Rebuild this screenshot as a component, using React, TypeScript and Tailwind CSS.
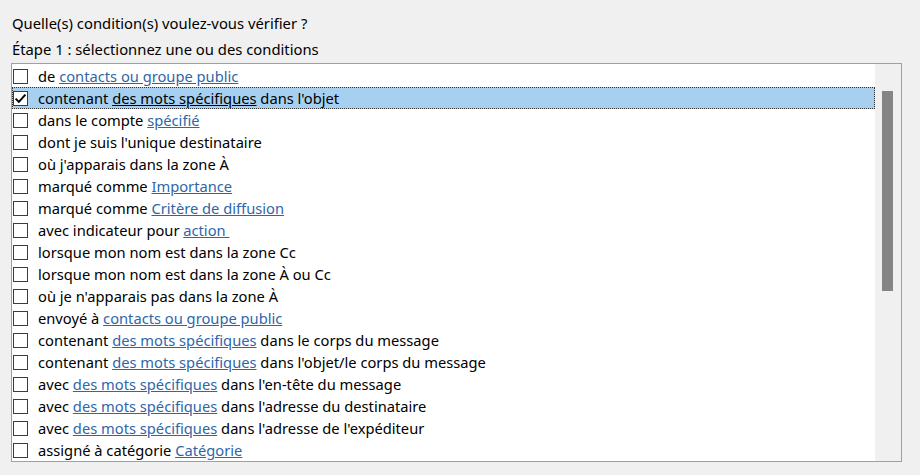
import React from "react";

type Part = { t: string; link?: boolean };
const rows: Part[][] = [
  [{ t: "de " }, { t: "contacts ou groupe public", link: true }],
  [{ t: "contenant " }, { t: "des mots spécifiques", link: true }, { t: " dans l'objet" }],
  [{ t: "dans le compte " }, { t: "spécifié", link: true }],
  [{ t: "dont je suis l'unique destinataire" }],
  [{ t: "où j'apparais dans la zone À" }],
  [{ t: "marqué comme " }, { t: "Importance", link: true }],
  [{ t: "marqué comme " }, { t: "Critère de diffusion", link: true }],
  [{ t: "avec indicateur pour " }, { t: "action\u00a0", link: true }],
  [{ t: "lorsque mon nom est dans la zone Cc" }],
  [{ t: "lorsque mon nom est dans la zone À ou Cc" }],
  [{ t: "où je n'apparais pas dans la zone À" }],
  [{ t: "envoyé à " }, { t: "contacts ou groupe public", link: true }],
  [{ t: "contenant " }, { t: "des mots spécifiques", link: true }, { t: " dans le corps du message" }],
  [{ t: "contenant " }, { t: "des mots spécifiques", link: true }, { t: " dans l'objet/le corps du message" }],
  [{ t: "avec " }, { t: "des mots spécifiques", link: true }, { t: " dans l'en-tête du message" }],
  [{ t: "avec " }, { t: "des mots spécifiques", link: true }, { t: " dans l'adresse du destinataire" }],
  [{ t: "avec " }, { t: "des mots spécifiques", link: true }, { t: " dans l'adresse de l'expéditeur" }],
  [{ t: "assigné à catégorie " }, { t: "Catégorie", link: true }],
];

function Checkbox({ checked }: { checked: boolean }) {
  return (
    <div className="w-[15px] h-[15px] border border-[#3c3c3c] bg-white flex items-center justify-center shrink-0">
      {checked && (
        <svg width="13" height="13" viewBox="0 0 13 13">
          <path d="M1.6 6.6 L4.9 9.9 L11.4 2.6" fill="none" stroke="#000" strokeWidth="2" />
        </svg>
      )}
    </div>
  );
}

export default function App() {
  return (
    <div
      className="w-[920px] h-[475px] bg-[#f0f0f0] text-[#000] overflow-hidden"
      style={{ fontFamily: '"Noto Sans", "Open Sans", sans-serif' }}
    >
      <div className="pt-[10px] pl-[12px] text-[14.8px] leading-[26px] h-[63px]">
        <div>Quelle(s) condition(s) voulez-vous vérifier ?</div>
        <div>Étape 1 : sélectionnez une ou des conditions</div>
      </div>
      <div className="ml-[11px] w-[891px] h-[399px] border border-[#a0a0a0] bg-white flex">
        <div className="flex-1 pt-[1px] text-[14.7px]">
          {rows.map((parts, i) => {
            const sel = i === 1;
            return (
              <div
                key={i}
                className={
                  "h-[22px] flex items-center pl-[1px] " +
                  (sel ? "bg-[#a6cff0] outline-1 outline-dotted outline-[#333] -outline-offset-1" : "")
                }
              >
                <Checkbox checked={sel} />
                <div className="ml-[10px] whitespace-pre leading-[22px]">
                  {parts.map((p, j) =>
                    p.link ? (
                      <span
                        key={j}
                        className={sel ? "underline text-black" : "underline text-[#2f66a8]"}
                      >
                        {p.t}
                      </span>
                    ) : (
                      <span key={j}>{p.t}</span>
                    )
                  )}
                </div>
              </div>
            );
          })}
        </div>
        <div className="w-[26px] bg-[#f0f0f0] pt-[27px] flex justify-center">
          <div className="w-[11px] h-[200px] bg-[#858585] ml-[-1px]" />
        </div>
      </div>
    </div>
  );
}
